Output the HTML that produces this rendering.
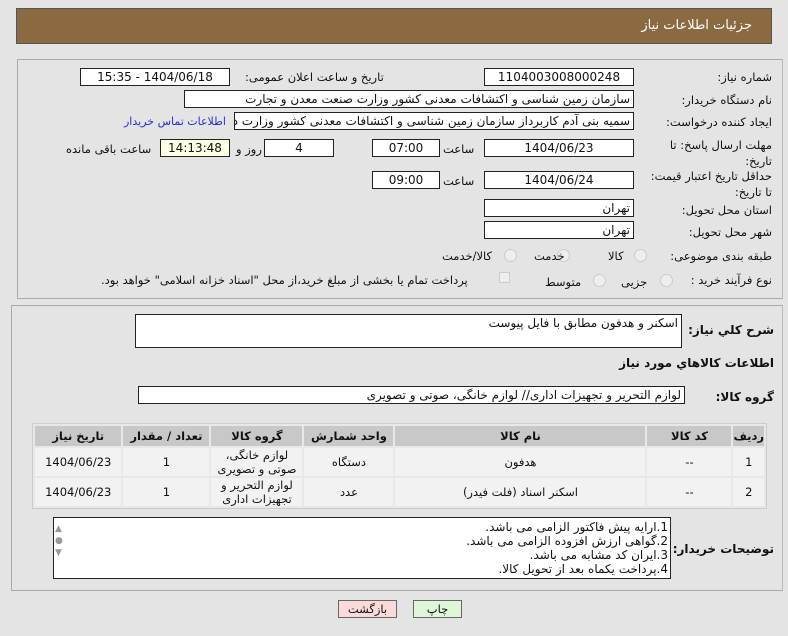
<!DOCTYPE html>
<html><head><meta charset="utf-8"><style>
*{margin:0;padding:0;box-sizing:border-box}
body{width:788px;height:636px;background:#e4e4e4;font-family:"DejaVu Sans","Liberation Sans",sans-serif;font-size:11.5px;color:#111;position:relative;overflow:hidden;direction:rtl}
.a{position:absolute;white-space:nowrap}
.box{position:absolute;background:#fff;border:1px solid #222;height:18px;line-height:16px;font-size:12px;overflow:hidden;white-space:nowrap}
.c{text-align:center}
.r{text-align:right;padding-right:3px}
.panel{position:absolute;border:1px solid #aaa;border-right-color:#bbb}
.rad{position:absolute;width:13px;height:13px;border-radius:50%;border:1px solid #ccc;background:#eee}
table{position:absolute;border-collapse:separate;border-spacing:2px;background:#e8e8e8;border:1px solid #ccc}
td,th{text-align:center;font-size:11.5px;line-height:14px}
th{background:#c8c8c8;height:20px;font-weight:bold}
td{background:#f2f2f2;height:28px}
</style></head><body>
<div class="a" style="left:16px;top:8px;width:756px;height:36px;background:#8b6a42;border:1px solid #555"></div>
<div class="a" style="right:36px;top:18px;color:#fff;font-size:13px">جزئیات اطلاعات نیاز</div>

<div class="panel" style="left:17px;top:59px;width:766px;height:240px"></div>
<div class="panel" style="left:11px;top:305px;width:772px;height:286px"></div>

<div class="a" style="right:16px;top:70px">شماره نیاز:</div>
<div class="box c" style="left:484px;top:68px;width:150px">1104003008000248</div>
<div class="a" style="left:245px;top:70px">تاریخ و ساعت اعلان عمومی:</div>
<div class="box c" style="left:80px;top:68px;width:150px">1404/06/18 - 15:35</div>

<div class="a" style="right:16px;top:93px">نام دستگاه خریدار:</div>
<div class="box r" style="left:184px;top:90px;width:450px">سازمان زمین شناسی و اکتشافات معدنی کشور وزارت صنعت معدن و تجارت</div>

<div class="a" style="right:16px;top:115px">ایجاد کننده درخواست:</div>
<div class="box r" style="left:234px;top:112px;width:400px">سمیه بنی آدم کاربرداز سازمان زمین شناسی و اکتشافات معدنی کشور وزارت د</div>
<div class="a" style="left:124px;top:115px;color:#2b2bd0;font-size:11px">اطلاعات تماس خریدار</div>

<div class="a" style="right:16px;top:137px;line-height:16px;white-space:normal;width:120px">مهلت ارسال پاسخ: تا تاریخ:</div>
<div class="box c" style="left:484px;top:139px;width:150px">1404/06/23</div>
<div class="a" style="left:443px;top:142px">ساعت</div>
<div class="box c" style="left:372px;top:139px;width:68px">07:00</div>
<div class="box c" style="left:264px;top:139px;width:70px">4</div>
<div class="a" style="left:236px;top:142px">روز و</div>
<div class="box c" style="left:160px;top:139px;width:70px;background:#ffffe6">14:13:48</div>
<div class="a" style="left:66px;top:142px">ساعت باقی مانده</div>

<div class="a" style="right:16px;top:168px;line-height:16px;white-space:normal;width:130px">حداقل تاریخ اعتبار قیمت: تا تاریخ:</div>
<div class="box c" style="left:484px;top:171px;width:150px">1404/06/24</div>
<div class="a" style="left:443px;top:174px">ساعت</div>
<div class="box c" style="left:372px;top:171px;width:68px">09:00</div>

<div class="a" style="right:16px;top:203px">استان محل تحویل:</div>
<div class="box r" style="left:484px;top:199px;width:150px">تهران</div>
<div class="a" style="right:16px;top:225px">شهر محل تحویل:</div>
<div class="box r" style="left:484px;top:221px;width:150px">تهران</div>

<div class="a" style="right:16px;top:249px">طبقه بندی موضوعی:</div>
<div class="rad" style="left:634px;top:249px"></div><div class="a" style="left:608px;top:249px">کالا</div>
<div class="rad" style="left:557px;top:249px"></div><div class="a" style="left:534px;top:249px">خدمت</div>
<div class="rad" style="left:504px;top:249px"></div><div class="a" style="left:442px;top:249px">کالا/خدمت</div>

<div class="a" style="right:16px;top:273px">نوع فرآیند خرید :</div>
<div class="rad" style="left:660px;top:274px"></div><div class="a" style="left:621px;top:275px">جزیی</div>
<div class="rad" style="left:593px;top:274px"></div><div class="a" style="left:545px;top:275px">متوسط</div>
<div class="a" style="left:499px;top:272px;width:11px;height:11px;border:1px solid #ccc;background:#eee"></div>
<div class="a" style="left:101px;top:273px">پرداخت تمام یا بخشی از مبلغ خرید،از محل "اسناد خزانه اسلامی" خواهد بود.</div>

<div class="a" style="right:14px;top:323px;font-weight:bold;font-size:12px">شرح کلي نياز:</div>
<div class="box" style="left:135px;top:314px;width:547px;height:34px;text-align:right;padding-right:3px">اسکنر و هدفون مطابق با فایل پیوست</div>
<div class="a" style="right:14px;top:356px;font-weight:bold;font-size:12px">اطلاعات کالاهاي مورد نياز</div>
<div class="a" style="right:14px;top:390px;font-weight:bold;font-size:12px">گروه کالا:</div>
<div class="box r" style="left:138px;top:386px;width:547px">لوازم التحریر و تجهیزات اداری// لوازم خانگی، صوتی و تصویری</div>

<table style="left:32px;top:423px;width:735px">
<tr><th style="width:24px">ردیف</th><th style="width:84px">کد کالا</th><th style="width:250px">نام کالا</th><th style="width:89px">واحد شمارش</th><th style="width:91px">گروه کالا</th><th style="width:86px">تعداد / مقدار</th><th>تاریخ نیاز</th></tr>
<tr><td>1</td><td>--</td><td>هدفون</td><td>دستگاه</td><td>لوازم خانگی،<br>صوتی و تصویری</td><td>1</td><td>1404/06/23</td></tr>
<tr><td>2</td><td>--</td><td>اسکنر اسناد (فلت فیدر)</td><td>عدد</td><td>لوازم التحریر و<br>تجهیزات اداری</td><td>1</td><td>1404/06/23</td></tr>
</table>

<div class="a" style="right:14px;top:542px;font-weight:bold;font-size:12px">توضیحات خریدار:</div>
<div class="box" style="left:53px;top:517px;width:618px;height:62px;line-height:14px;text-align:right;padding-right:2px;padding-top:2px">1.ارایه پیش فاکتور الزامی می باشد.<br>2.گواهی ارزش افزوده الزامی می باشد.<br>3.ایران کد مشابه می باشد.<br>4.پرداخت یکماه بعد از تحویل کالا.</div>
<div class="a" style="left:55px;top:523px;color:#999;font-size:9px;line-height:12px;direction:ltr">▲<br>●<br>▼</div>

<div class="a" style="left:338px;top:600px;width:59px;height:18px;border:1px solid #666;background:#fbdada;text-align:center;line-height:16px">بازگشت</div>
<div class="a" style="left:413px;top:600px;width:49px;height:18px;border:1px solid #666;background:#ddf7d8;text-align:center;line-height:16px">چاپ</div>
</body></html>
